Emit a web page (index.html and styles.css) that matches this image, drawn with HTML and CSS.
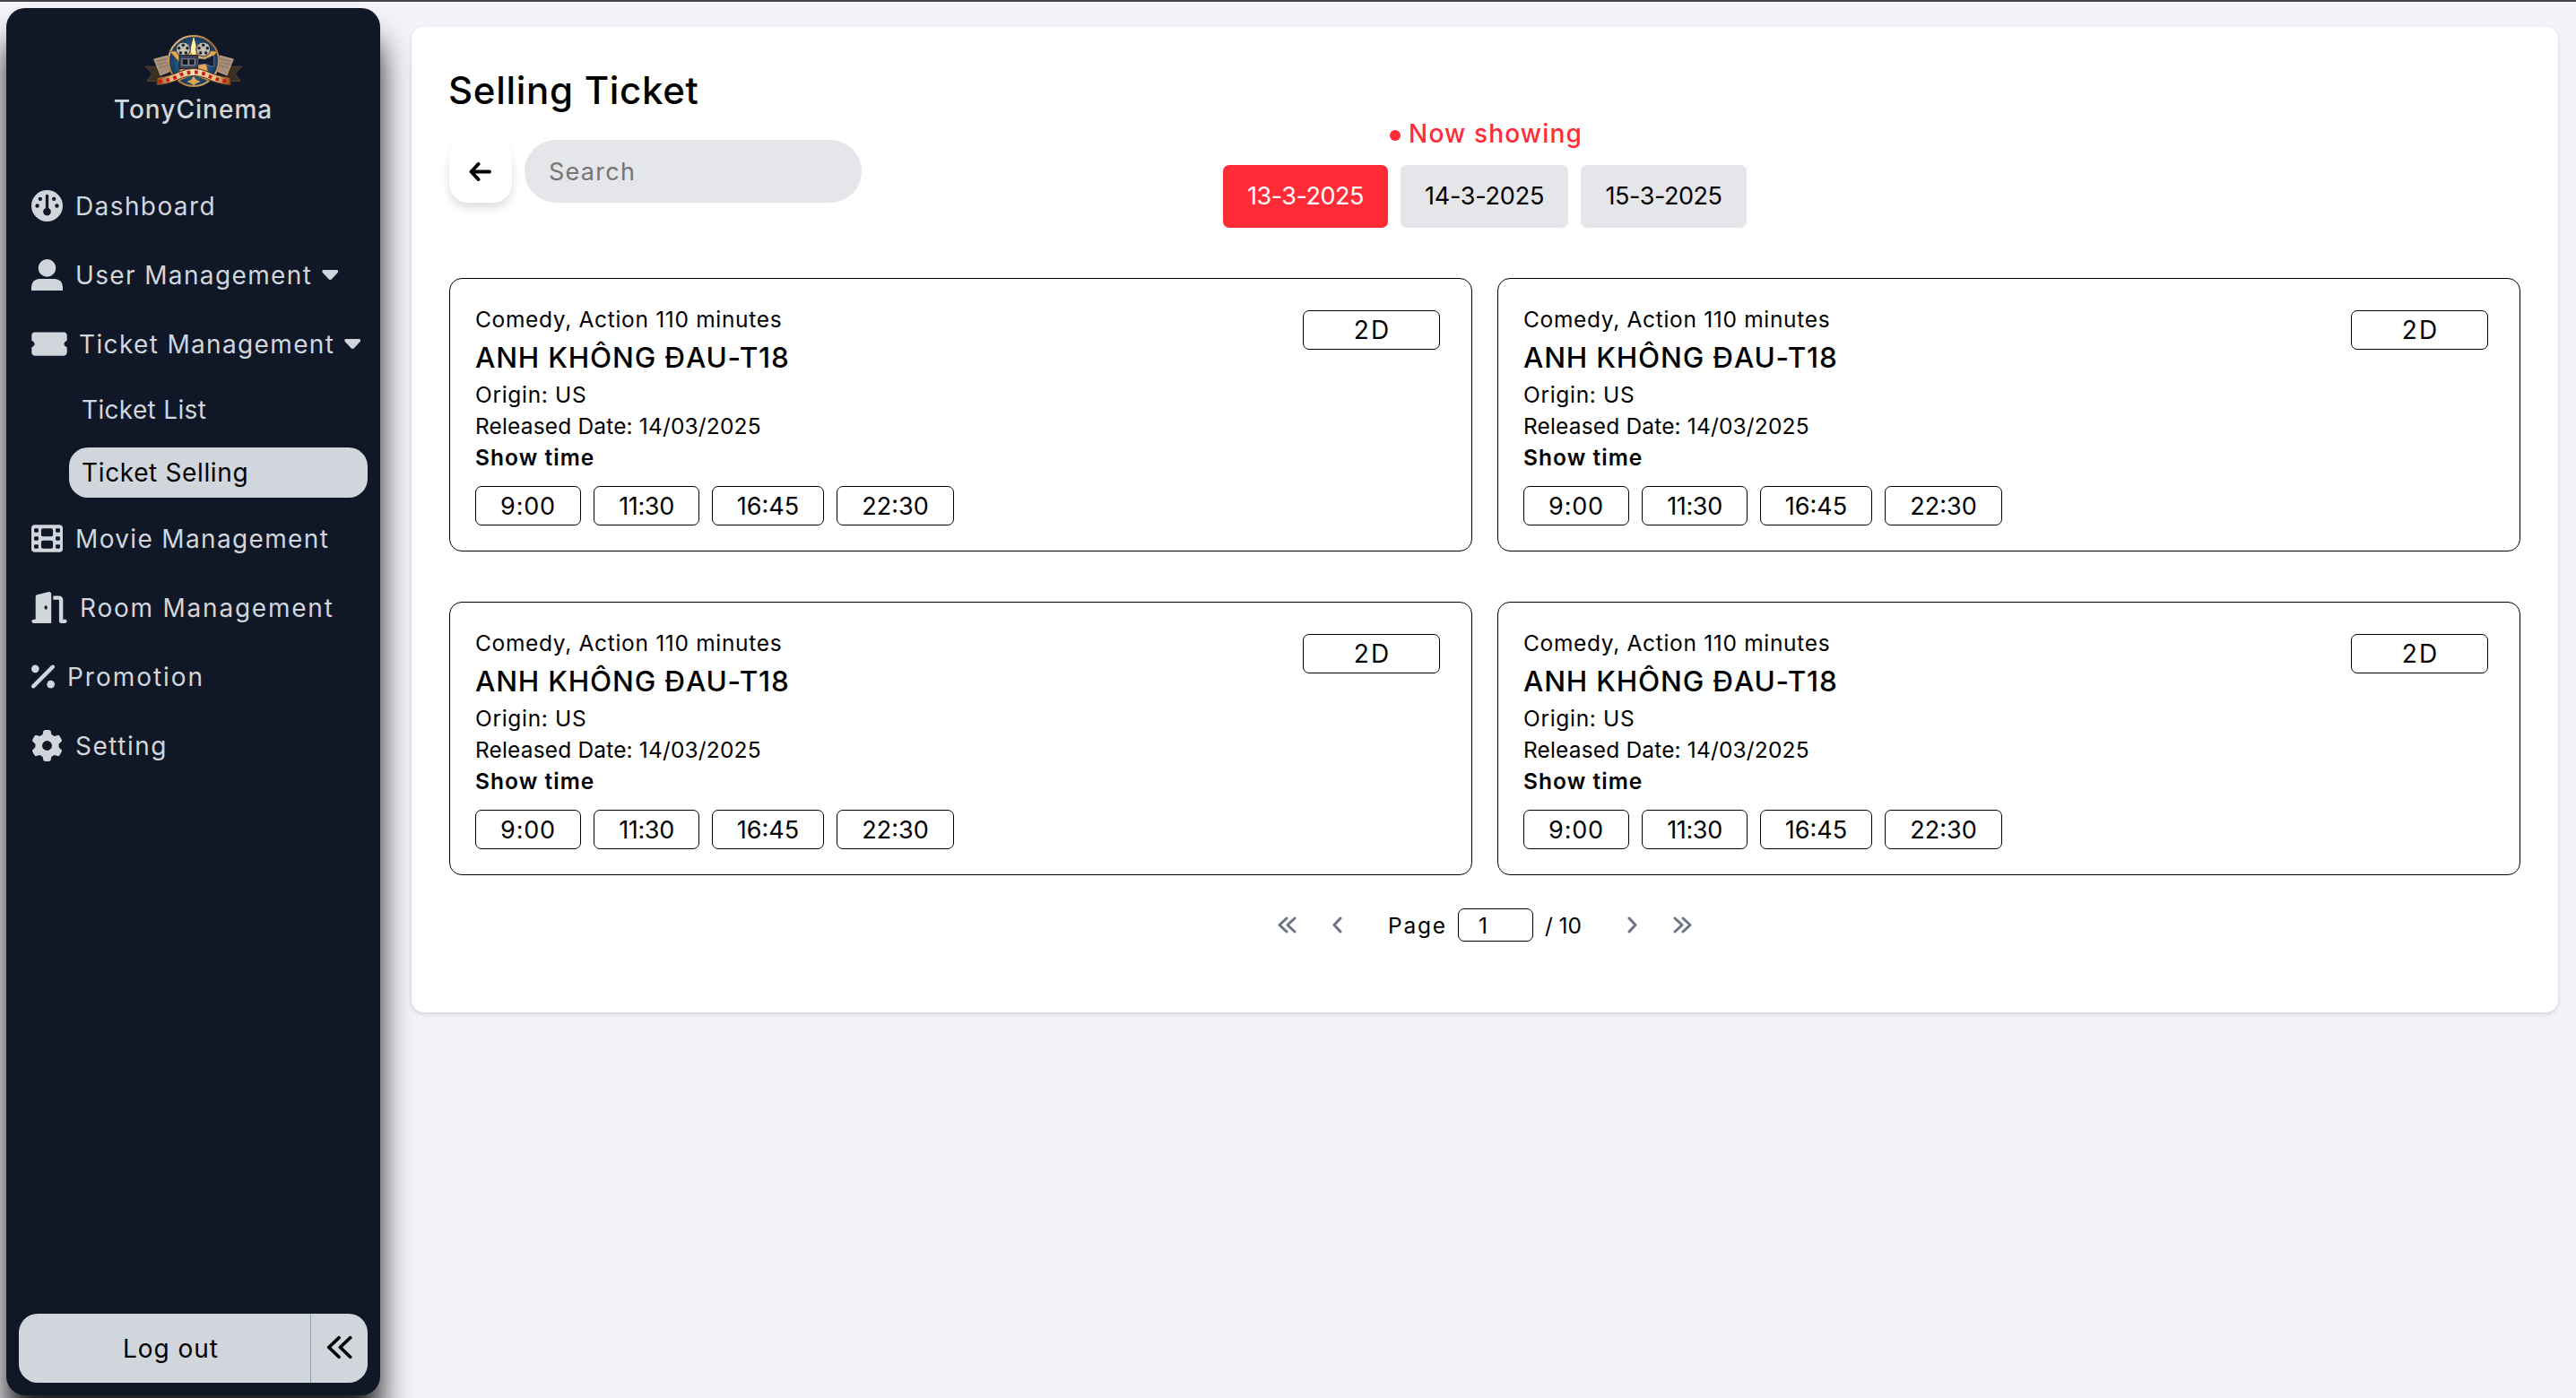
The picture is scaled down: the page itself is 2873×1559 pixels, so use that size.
FILE: index.html
```
<!DOCTYPE html>
<html lang="en">
<head>
<meta charset="utf-8">
<title>TonyCinema - Selling Ticket</title>
<link rel="stylesheet" href="styles.css">
</head>
<body>
<svg class="sprite" aria-hidden="true">
  <symbol id="double-left" viewBox="0 0 21 19"><path d="M10 2 2 9.500 10 17M19 2 11 9.500 19 17"/></symbol>
  <symbol id="left" viewBox="0 0 11 19"><path d="M9 2 2 9.500 9 17"/></symbol>
</svg>
<div class="app">
  <aside class="sidebar">
    <div class="brand">
      <svg class="brand-logo" viewBox="33 27 324 174">
        <defs>
          <linearGradient id="gold" x1="0" y1="0" x2="1" y2="1"><stop offset="0" stop-color="#f3cf93"/><stop offset=".5" stop-color="#a8682f"/><stop offset="1" stop-color="#e9b775"/></linearGradient>
          <radialGradient id="sky"><stop offset="0" stop-color="#3f8cc2"/><stop offset="1" stop-color="#14365c"/></radialGradient>
          <linearGradient id="film" x1="0" x2="1" y1="0" y2="0"><stop offset="0" stop-color="#8b4a1d"/><stop offset=".2" stop-color="#e2bd7c"/><stop offset=".5" stop-color="#f6e3b0"/><stop offset=".8" stop-color="#e2bd7c"/><stop offset="1" stop-color="#8b4a1d"/></linearGradient>
        </defs>
        <path d="M33 132 86 134 84 182 38 182 56 157zM357 132 304 134 306 182 352 182 334 157z" fill="#3c3024" stroke="#8b7048" stroke-width="2" stroke-dasharray="4 3"/>
        <path d="M62 108 108 96 114 150 84 162zM328 108 282 96 276 150 306 162z" fill="#a88e78" stroke="#d8c2a4" stroke-width="2"/>
        <path d="M70 116 106 106M73 127 107 117M77 138 109 128M320 116 284 106M317 127 283 117M313 138 281 128" stroke="#7f6755" stroke-width="2"/>
        <circle cx="195" cy="114" r="87" fill="#122238"/>
        <circle cx="195" cy="114" r="84" fill="url(#sky)" stroke="url(#gold)" stroke-width="6"/>
        <path d="M195 32 207 78 275 82 238 124 248 182 195 160 142 182 152 124 115 82 183 78z" fill="#e3a957" stroke="#7a4a1c" stroke-width="2"/>
        <path d="M195 32 206 78 195 100 184 78z" fill="#fff0a4"/>
        <g fill="#b9b8b2" stroke="#2a2928" stroke-width="3"><circle cx="160" cy="75" r="24"/><circle cx="227" cy="75" r="24"/></g>
        <g fill="#1b1b1d"><circle cx="160" cy="61" r="5"/><circle cx="174" cy="71" r="5"/><circle cx="169" cy="87" r="5"/><circle cx="151" cy="87" r="5"/><circle cx="146" cy="71" r="5"/><circle cx="227" cy="61" r="5"/><circle cx="241" cy="71" r="5"/><circle cx="236" cy="87" r="5"/><circle cx="218" cy="87" r="5"/><circle cx="213" cy="71" r="5"/></g>
        <circle cx="160" cy="76" r="4" fill="#e7c98f"/><circle cx="227" cy="76" r="4" fill="#e7c98f"/>
        <path d="M147 95H209V140H147z" fill="#3b4358" stroke="#171a24" stroke-width="3"/>
        <path d="M154 106H201V130H154z" fill="#7e8596"/><path d="M158 109H175V126H158zM181 109H197V126H181z" fill="#15171f"/>
        <path d="M209 105 232 108 263 94V134L232 124 209 128z" fill="#161c30" stroke="#7b87a5" stroke-width="2"/>
        <path d="M72 170Q120 164 150 149Q195 130 240 149Q270 164 318 170V195Q270 190 238 172Q195 155 152 172Q120 190 72 195z" fill="url(#film)" stroke="#55301a" stroke-width="3"/>
        <path d="M78 183Q122 178 152 160Q195 143 238 160Q268 178 312 183" fill="none" stroke="#d0141f" stroke-width="12" stroke-dasharray="11 14"/>
        <path d="M195 164 203 176 218 184 205 188 195 196 185 188 172 184 187 176z" fill="#dda552"/>
      </svg>
      <span class="brand-name">TonyCinema</span>
    </div>
    <nav class="nav">
      <a class="nav-row dashboard"><svg width="35" height="35" viewBox="0 0 512 512"><circle cx="256" cy="256" r="256"/><g class="hole"><path d="M232 92a24 24 0 0 1 48 0V292a64 64 0 1 1-48 0z"/><circle cx="144" cy="144" r="32"/><circle cx="368" cy="144" r="32"/><circle cx="96" cy="256" r="32"/><circle cx="416" cy="256" r="32"/></g></svg><span>Dashboard</span></a>
      <a class="nav-row users"><svg width="35" height="35" viewBox="0 0 512 512"><circle cx="256" cy="144" r="144"/><path d="M0 512V450A128 128 0 0 1 128 322H384A128 128 0 0 1 512 450V512z"/></svg><span>User Management</span><i class="caret"></i></a>
      <a class="nav-row tickets"><svg width="40" height="35" viewBox="0 0 576 512"><path d="M0 112C0 85 21 64 48 64H528C555 64 576 85 576 112V200C562 206 528 226 528 256S562 306 576 312V400C576 427 555 448 528 448H48C21 448 0 427 0 400V312C14 306 48 286 48 256S14 206 0 200z"/></svg><span>Ticket Management</span><i class="caret"></i></a>
      <div class="subnav">
        <a class="sub list">Ticket List</a>
        <a class="sub selling active">Ticket Selling</a>
      </div>
      <a class="nav-row movies"><svg width="35" height="35" viewBox="0 0 512 512"><rect y="32" width="512" height="448" rx="56"/><g class="hole"><rect x="44" y="92" width="72" height="64" rx="16"/><rect x="44" y="224" width="72" height="64" rx="16"/><rect x="44" y="356" width="72" height="64" rx="16"/><rect x="396" y="92" width="72" height="64" rx="16"/><rect x="396" y="224" width="72" height="64" rx="16"/><rect x="396" y="356" width="72" height="64" rx="16"/><rect x="160" y="92" width="192" height="132" rx="30"/><rect x="160" y="288" width="192" height="132" rx="30"/></g></svg><span>Movie Management</span></a>
      <a class="nav-row rooms"><svg width="40" height="35" viewBox="0 0 576 512"><path d="M320 32C320 10 300-4 280 1L88 49C74 53 64 66 64 80V448H32C14 448 0 462 0 480S14 512 32 512H320zM232 224C246 224 256 238 256 256S246 288 232 288 208 274 208 256 218 224 232 224zM352 128H448V480C448 498 462 512 480 512H544C562 512 576 498 576 480S562 448 544 448H512V128C512 93 483 64 448 64H352z" fill-rule="evenodd"/></svg><span>Room Management</span></a>
      <a class="nav-row promo"><svg width="26" height="35" viewBox="0 0 384 512"><path d="M375 119C387 106 387 86 375 73S342 61 329 73L9 393C-3 406-3 426 9 439S42 451 55 439z"/><circle cx="64" cy="128" r="64"/><circle cx="320" cy="384" r="64"/></svg><span>Promotion</span></a>
      <a class="nav-row setting"><svg width="35" height="35" viewBox="0 0 512 512"><path fill-rule="evenodd" d="M495.900 166.600c3.200 8.700 .5 18.400-6.400 24.600l-43.300 39.400c1.100 8.300 1.700 16.800 1.700 25.400s-.6 17.100-1.700 25.400l43.300 39.400c6.900 6.200 9.600 15.900 6.400 24.600c-4.400 11.900-9.700 23.300-15.800 34.300l-4.700 8.100c-6.600 11-14 21.400-22.100 31.200c-5.900 7.200-15.700 9.600-24.500 6.800l-55.700-17.700c-13.400 10.300-28.200 18.900-44 25.400l-12.500 57.100c-2 9.100-9 16.300-18.200 17.800c-13.800 2.300-28 3.500-42.500 3.500s-28.700-1.200-42.500-3.500c-9.200-1.500-16.200-8.700-18.200-17.800l-12.500-57.100c-15.800-6.500-30.600-15.100-44-25.400L83.100 425.900c-8.800 2.800-18.600 .3-24.500-6.800c-8.100-9.800-15.500-20.200-22.100-31.200l-4.700-8.100c-6.100-11-11.400-22.400-15.800-34.300c-3.200-8.700-.5-18.400 6.400-24.600l43.300-39.400C64.600 273.100 64 264.600 64 256s.6-17.100 1.700-25.400L22.400 191.200c-6.900-6.200-9.600-15.900-6.400-24.600c4.400-11.900 9.700-23.300 15.800-34.300l4.700-8.100c6.600-11 14-21.400 22.100-31.200c5.900-7.200 15.700-9.600 24.500-6.800l55.700 17.700c13.400-10.300 28.200-18.900 44-25.400l12.500-57.100c2-9.100 9-16.300 18.200-17.800C227.300 1.200 241.500 0 256 0s28.700 1.200 42.500 3.500c9.200 1.500 16.200 8.700 18.200 17.800l12.500 57.100c15.800 6.500 30.600 15.100 44 25.400l55.700-17.700c8.800-2.800 18.600-.3 24.500 6.800c8.100 9.800 15.500 20.200 22.100 31.200l4.700 8.100c6.100 11 11.400 22.400 15.800 34.300zM256 336a80 80 0 1 0 0-160 80 80 0 1 0 0 160z"/></svg><span>Setting</span></a>
    </nav>
    <div class="logout">
      <button class="logout-btn">Log out</button>
      <button class="collapse-btn"><svg class="stroke" width="29" height="27" viewBox="0 0 31 28"><path d="M15 2.500 3 14 15 25.500M28.500 2.500 16.500 14 28.500 25.500"/></svg></button>
    </div>
  </aside>

  <main class="panel">
    <header class="header">
      <div class="header-left">
        <h1>Selling Ticket</h1>
        <div class="tools">
          <button class="back"><svg class="stroke" width="25" height="21" viewBox="0 0 26 22"><path d="M11 2 2.500 11 11 20M3 11H24"/></svg></button>
          <input class="search" placeholder="Search">
        </div>
      </div>
      <div class="schedule">
        <div class="now"><i class="dot"></i>Now showing</div>
        <div class="dates">
          <button class="date selected">13-3-2025</button>
          <button class="date second">14-3-2025</button>
          <button class="date third">15-3-2025</button>
        </div>
      </div>
    </header>

    <section class="movies-grid">
      <article class="movie">
        <div class="info">
          <p class="genre">Comedy, Action 110 minutes</p>
          <h2>ANH KHÔNG ĐAU-T18</h2>
          <p class="origin">Origin: US</p>
          <p class="released">Released Date: 14/03/2025</p>
          <p class="show-label">Show time</p>
          <div class="times"><button class="t1">9:00</button><button class="t2">11:30</button><button class="t3">16:45</button><button class="t4">22:30</button></div>
        </div>
        <div class="format">2D</div>
      </article>
      <article class="movie">
        <div class="info">
          <p class="genre">Comedy, Action 110 minutes</p>
          <h2>ANH KHÔNG ĐAU-T18</h2>
          <p class="origin">Origin: US</p>
          <p class="released">Released Date: 14/03/2025</p>
          <p class="show-label">Show time</p>
          <div class="times"><button class="t1">9:00</button><button class="t2">11:30</button><button class="t3">16:45</button><button class="t4">22:30</button></div>
        </div>
        <div class="format">2D</div>
      </article>
      <article class="movie">
        <div class="info">
          <p class="genre">Comedy, Action 110 minutes</p>
          <h2>ANH KHÔNG ĐAU-T18</h2>
          <p class="origin">Origin: US</p>
          <p class="released">Released Date: 14/03/2025</p>
          <p class="show-label">Show time</p>
          <div class="times"><button class="t1">9:00</button><button class="t2">11:30</button><button class="t3">16:45</button><button class="t4">22:30</button></div>
        </div>
        <div class="format">2D</div>
      </article>
      <article class="movie">
        <div class="info">
          <p class="genre">Comedy, Action 110 minutes</p>
          <h2>ANH KHÔNG ĐAU-T18</h2>
          <p class="origin">Origin: US</p>
          <p class="released">Released Date: 14/03/2025</p>
          <p class="show-label">Show time</p>
          <div class="times"><button class="t1">9:00</button><button class="t2">11:30</button><button class="t3">16:45</button><button class="t4">22:30</button></div>
        </div>
        <div class="format">2D</div>
      </article>
    </section>

    <footer class="pager">
      <div class="arrows"><svg width="21" height="19"><use href="#double-left"/></svg><svg width="11" height="19"><use href="#left"/></svg></div>
      <div class="page-info"><span class="page-label">Page</span><input class="page-input" value="1"><span class="page-total">/ 10</span></div>
      <div class="arrows next"><svg width="21" height="19"><use href="#double-left"/></svg><svg width="11" height="19"><use href="#left"/></svg></div>
    </footer>
  </main>
</div>
</body>
</html>
```
FILE: styles.css
```
* { box-sizing: border-box; margin: 0; padding: 0; }
html, body { height: 100%; }
body {
  font-family: Inter, "Open Sans", sans-serif;
  font-size: 27px;
  line-height: 42px;
  color: #000;
  background: #f4f3f9;
  overflow: hidden;
}
button, input { font: inherit; color: inherit; border: 0; background: none; letter-spacing: inherit; }
button { display: flex; align-items: center; justify-content: center; white-space: nowrap; }
.sprite { display: none; }
.stroke { fill: none; stroke: #000; stroke-width: 4; stroke-linecap: round; stroke-linejoin: round; }

.app {
  display: flex;
  align-items: flex-start;
  height: 1559px;
  padding: 7px 20px 0 7px;
  border-top: 2px solid #464344;
}

/* Sidebar */
.sidebar {
  display: flex;
  flex-direction: column;
  flex: none;
  width: 417px;
  height: 1547px;
  padding: 30px 14px 14px;
  border-radius: 21px;
  background: #101726;
  color: #d1d5dc;
  font-size: 28px;
  box-shadow: 0 35px 35px rgba(0, 0, 0, .88);
  position: relative;
  z-index: 1;
}
.brand { display: flex; flex-direction: column; align-items: center; }
.brand-logo { width: 108px; height: 58px; }
.brand-name { font-weight: 500; letter-spacing: 1.03px; margin-top: 4px; line-height: 42px; }
.nav { display: flex; flex-direction: column; margin-top: 48px; }
.nav-row { display: flex; align-items: center; height: 77px; padding-left: 14px; white-space: nowrap; }
.nav-row svg { fill: currentColor; margin-right: 14px; flex: none; }
.nav-row svg .hole { fill: #101726; }
.caret { width: 18px; height: 11px; margin-left: 11px; background: currentColor; clip-path: polygon(6% 0, 94% 0, 100% 10%, 98% 25%, 58% 95%, 50% 100%, 42% 95%, 2% 25%, 0 10%); }
.dashboard { letter-spacing: 1.4px; }
.users { letter-spacing: 1.37px; }
.tickets { letter-spacing: 1.35px; }
.tickets svg { margin-right: 13px; }
.movies { letter-spacing: 1.35px; }
.rooms { letter-spacing: 1.78px; }
.promo { letter-spacing: 1.97px; }
.setting { letter-spacing: 1.5px; }
.subnav { display: flex; flex-direction: column; gap: 14px; padding: 7px 0 7px 56px; }
.sub { height: 56px; padding-left: 14px; line-height: 57px; border-radius: 21px; }
.list { letter-spacing: .34px; }
.selling { letter-spacing: .64px; }
.active { background: #d1d5dc; color: #000; }
.logout { display: flex; height: 77px; margin-top: auto; border-radius: 21px; background: #d1d5dc; color: #000; }
.logout-btn { width: 326px; padding-left: 14px; letter-spacing: .95px; border-right: 1px solid #90a1b9; }
.collapse-btn { flex: 1; padding-right: 1px; }
.collapse-btn svg { margin-bottom: 3px; }

/* Content panel */
.panel {
  flex: 1;
  height: 1099px;
  margin: 21px 0 0 35px;
  padding: 42px;
  border-radius: 14px;
  background: #fff;
  box-shadow: 0 2px 5px rgba(0, 0, 0, .14);
}
.header { display: grid; grid-template-columns: 1fr 584px 1fr; align-items: start; height: 182px; }
h1 { font-size: 42px; font-weight: 500; line-height: 57px; height: 56px; letter-spacing: .7px; margin-left: -1px; }
.tools { display: flex; gap: 14px; margin-top: 28px; }
.back { width: 70px; height: 70px; padding-right: 2px; border-radius: 21px; box-shadow: 0 6px 10px rgba(0, 0, 0, .13); background: #fff; }
.search { width: 376px; height: 70px; padding: 0 27px; border-radius: 35px; background: #e5e6ea; letter-spacing: 1.27px; }
.search::placeholder { color: #757575; opacity: 1; }
.schedule { align-self: end; }
.now { display: flex; align-items: center; justify-content: center; padding-left: 3px; color: #ff2c37; font-size: 28px; font-weight: 500; letter-spacing: 1.15px; }
.dot { width: 12px; height: 12px; margin: 4px 9px 0 0; border-radius: 50%; background: #ff2c37; }
.dates { display: flex; gap: 14px; margin-top: 14px; }
.date { width: 185px; height: 70px; border-radius: 7px; background: #e5e6ea; letter-spacing: -.48px; }
.date.second { width: 187px; letter-spacing: -.21px; }
.date.selected { width: 184px; background: #ff2c37; color: #fff; }

/* Movie cards */
.movies-grid { display: grid; grid-template-columns: 1fr 1fr; gap: 56px 28px; margin-top: 56px; }
.movie {
  display: flex;
  justify-content: space-between;
  align-items: flex-start;
  height: 305px;
  padding: 28px;
  border: 1px solid #000;
  border-radius: 14px;
}
.info { font-size: 24.5px; line-height: 35px; white-space: nowrap; }
.info h2 { font-size: 31.5px; font-weight: 500; line-height: 49px; letter-spacing: .83px; }
.genre, .origin { letter-spacing: .68px; }
.released { letter-spacing: .16px; }
.show-label { font-weight: 600; letter-spacing: 1.05px; }
.times { display: flex; gap: 14px; margin-top: 14px; font-size: 27px; }
.times button { width: 118px; height: 44px; border: 1px solid #000; border-radius: 7px; }
.times .t1 { letter-spacing: .82px; }
.times .t2 { letter-spacing: -.35px; }
.times .t3 { width: 125px; }
.times .t4 { width: 131px; }
.format { width: 153px; height: 44px; margin: 7px 7px 0 0; padding-left: 2px; border: 1px solid #000; border-radius: 7px; font-size: 28px; text-align: center; letter-spacing: 2px; }

/* Pager */
.pager { display: flex; align-items: center; justify-content: center; gap: 51px; height: 37px; margin-top: 37px; font-size: 24.5px; }
.arrows { display: flex; gap: 40px; }
.arrows svg { fill: none; stroke: #6b7385; stroke-width: 3; stroke-linecap: round; stroke-linejoin: round; }
.arrows.next { transform: scaleX(-1); }
.page-info { display: flex; align-items: center; }
.page-label { width: 78px; letter-spacing: 1.8px; }
.page-input { width: 84px; height: 37px; padding: 0 22px; border: 1px solid #000; border-radius: 7px; }
.page-total { width: 54px; padding-left: 13px; letter-spacing: -.07px; white-space: nowrap; }
```
